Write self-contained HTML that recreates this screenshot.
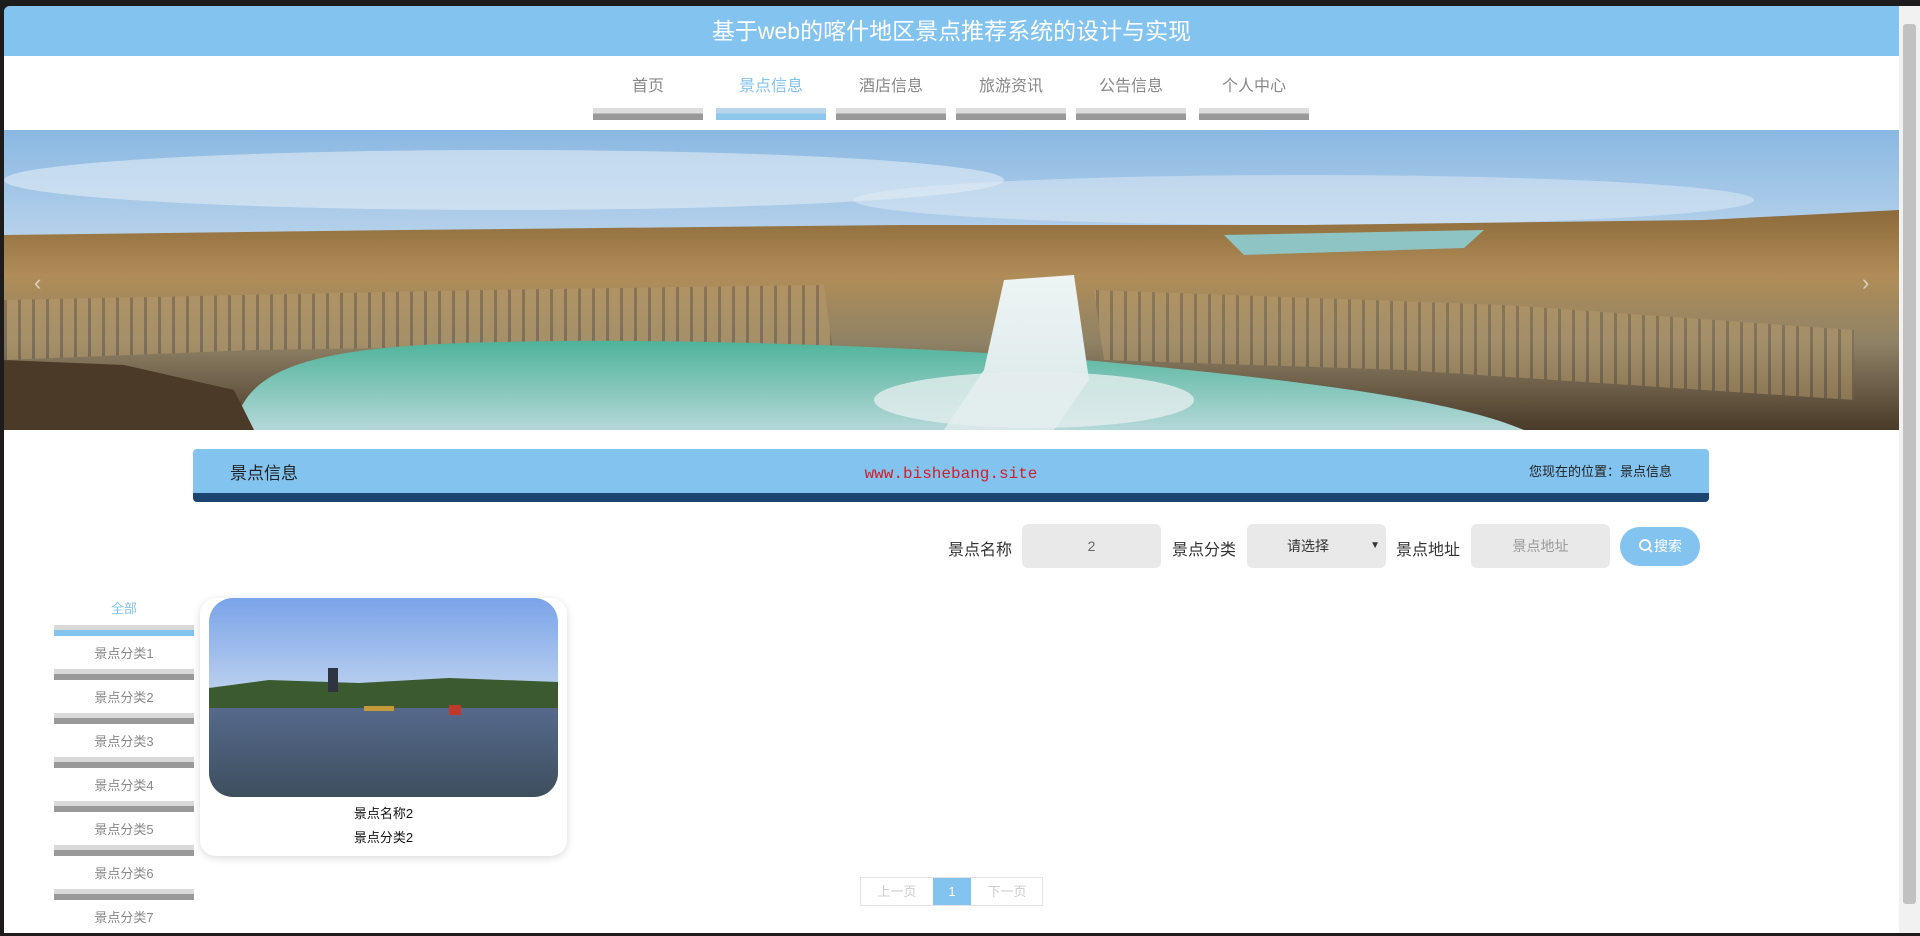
<!DOCTYPE html>
<html><head><meta charset="utf-8"><style>
*{margin:0;padding:0;box-sizing:border-box}
body{width:1920px;height:936px;overflow:hidden;background:#1e1b1c;font-family:"Liberation Sans","Noto Sans CJK SC",sans-serif;position:relative}
#page{position:absolute;left:4px;top:6px;width:1895px;height:927px;background:#fff;overflow:hidden;border-radius:6px 0 0 0}
#sb{position:absolute;left:1899px;top:6px;width:21px;height:927px;background:#f1f1f1}
#sb div{position:absolute;left:4px;top:18px;width:13px;height:880px;background:#c1c1c1;border-radius:3px}
.hdr{position:absolute;left:0;top:0;width:1895px;height:50px;background:#83c3f0;color:#fff;font-size:23px;text-align:center;line-height:50px}
.nav a{position:absolute;top:66px;width:110px;text-align:center;font-size:16px;color:#888;text-decoration:none}
.nav i{position:absolute;top:102px;width:110px;height:12px;background:linear-gradient(#ddd 0,#ddd 45%,#999 45%)}
.nav i.on{background:linear-gradient(#b8d4ea 0,#b8d4ea 45%,#8ec6ec 45%)}
.banner{position:absolute;left:0;top:124px;width:1895px;height:300px}
.tb{position:absolute;left:189px;top:443px;width:1516px;height:53px;border-radius:4px;background:#83c3f0;overflow:hidden}
.tb .bot{position:absolute;left:0;bottom:0;width:100%;height:9px;background:#1b4570}
.lab{position:absolute;font-size:16px;color:#333}
.inp{position:absolute;top:518px;height:44px;background:#e9e9e9;border-radius:6px;font-size:14px;color:#666;text-align:center;line-height:44px}
.side{position:absolute;left:50px;width:140px;text-align:center;font-size:13px;color:#888}
.sbar{position:absolute;left:50px;width:140px;height:11px;background:linear-gradient(#d9d9d9 0,#d9d9d9 45%,#999 45%)}
</style></head><body>
<div id="page">
<div class="hdr">基于web的喀什地区景点推荐系统的设计与实现</div>
<div class="nav">
<a style="left:589px">首页</a><i style="left:589px"></i>
<a style="left:712px;color:#83c3f0">景点信息</a><i class="on" style="left:712px"></i>
<a style="left:832px">酒店信息</a><i style="left:832px"></i>
<a style="left:952px">旅游资讯</a><i style="left:952px"></i>
<a style="left:1072px">公告信息</a><i style="left:1072px"></i>
<a style="left:1195px">个人中心</a><i style="left:1195px"></i>
</div>
<svg class="banner" viewBox="0 0 1895 300" preserveAspectRatio="none">
<defs>
<linearGradient id="sky" x1="0" y1="0" x2="0" y2="1"><stop offset="0" stop-color="#8ab8e2"/><stop offset=".5" stop-color="#c8dcee"/><stop offset="1" stop-color="#7fb0df"/></linearGradient>
<linearGradient id="rock" x1="0" y1="0" x2="0" y2="1"><stop offset="0" stop-color="#8c6a3a"/><stop offset=".3" stop-color="#b08d58"/><stop offset=".6" stop-color="#8f8266"/><stop offset="1" stop-color="#4a3b2a"/></linearGradient>
<linearGradient id="wat" x1="0" y1="0" x2="0" y2="1"><stop offset="0" stop-color="#4fb39a"/><stop offset="1" stop-color="#b4d8d8"/></linearGradient>
<linearGradient id="fall" x1="0" y1="0" x2="0" y2="1"><stop offset="0" stop-color="#eef4f4"/><stop offset="1" stop-color="#d8e8e8"/></linearGradient>
<pattern id="col" width="14" height="10" patternUnits="userSpaceOnUse"><rect width="14" height="10" fill="#b59a6c"/><rect width="3" height="10" fill="#6f6250"/></pattern>
</defs>
<rect width="1895" height="300" fill="url(#sky)"/>
<ellipse cx="500" cy="50" rx="500" ry="30" fill="#e2ecf5" opacity=".6"/>
<ellipse cx="1300" cy="70" rx="450" ry="25" fill="#e2ecf5" opacity=".5"/>
<path d="M0 105 L400 100 L900 95 L1300 95 L1700 90 L1895 80 L1895 300 L0 300Z" fill="url(#rock)"/>
<path d="M0 170 L480 160 L820 155 L830 230 L600 215 L250 220 L0 230Z" fill="url(#col)" opacity=".55"/>
<path d="M1090 160 L1500 175 L1850 200 L1850 270 L1400 240 L1100 230Z" fill="url(#col)" opacity=".5"/>
<path d="M1220 105 L1480 100 L1460 118 L1240 125Z" fill="#8fc4c4"/>
<path d="M230 300 C240 240 300 215 500 212 C650 208 900 215 1080 230 C1300 250 1450 270 1520 300Z" fill="url(#wat)"/>
<path d="M1000 150 L1070 145 L1085 250 L1050 300 L940 300 L980 240Z" fill="url(#fall)"/>
<ellipse cx="1030" cy="270" rx="160" ry="28" fill="#e3eeee" opacity=".8"/>
<path d="M0 230 L120 235 L230 260 L250 300 L0 300Z" fill="#4b3a28"/>
<text x="30" y="160" fill="#fff" opacity=".6" font-size="22">‹</text>
<text x="1858" y="160" fill="#fff" opacity=".6" font-size="22">›</text>
</svg>
<div class="tb"><div class="bot"></div>
<div style="position:absolute;left:37px;top:10px;font-size:17px;color:#222">景点信息</div>
<div style="position:absolute;left:0;width:100%;text-align:center;top:16px;font-family:'Liberation Mono',monospace;font-size:16px;color:#d0202a">www.bishebang.site</div>
<div style="position:absolute;right:37px;top:12px;font-size:13px;color:#222">您现在的位置：景点信息</div>
</div>
<div class="lab" style="left:944px;top:530px">景点名称</div>
<div class="inp" style="left:1018px;width:139px">2</div>
<div class="lab" style="left:1168px;top:530px">景点分类</div>
<div class="inp" style="left:1243px;width:139px;text-align:left;padding-left:40px;color:#333">请选择<span style="position:absolute;right:6px;font-size:10px">▼</span></div>
<div class="lab" style="left:1392px;top:530px">景点地址</div>
<div class="inp" style="left:1467px;width:139px;color:#999">景点地址</div>
<div style="position:absolute;left:1616px;top:521px;width:80px;height:39px;border-radius:20px;background:#83c3f0;color:#fff;font-size:14px;line-height:39px;text-align:center">
<svg width="16" height="16" viewBox="0 0 16 16" style="vertical-align:-3px"><circle cx="7" cy="7" r="5" fill="none" stroke="#fff" stroke-width="1.8"/><path d="M10.5 10.5L14 14" stroke="#fff" stroke-width="1.8"/></svg>搜索</div>
<div class="side" style="top:592px;color:#83c3f0">全部</div>
<div class="sbar" style="top:619px;background:linear-gradient(#d9d9d9 0,#d9d9d9 45%,#83c3f0 45%)"></div>
<div class="side" style="top:637px">景点分类1</div><div class="sbar" style="top:663px"></div>
<div class="side" style="top:681px">景点分类2</div><div class="sbar" style="top:707px"></div>
<div class="side" style="top:725px">景点分类3</div><div class="sbar" style="top:751px"></div>
<div class="side" style="top:769px">景点分类4</div><div class="sbar" style="top:795px"></div>
<div class="side" style="top:813px">景点分类5</div><div class="sbar" style="top:839px"></div>
<div class="side" style="top:857px">景点分类6</div><div class="sbar" style="top:883px"></div>
<div class="side" style="top:901px">景点分类7</div>
<div style="position:absolute;left:196px;top:592px;width:367px;height:258px;border-radius:16px;box-shadow:0 2px 8px rgba(0,0,0,.15);background:#fff">
<svg style="position:absolute;left:9px;top:0;border-radius:24px" width="349" height="199" viewBox="0 0 349 199">
<defs><linearGradient id="s2" x1="0" y1="0" x2="0" y2="1"><stop offset="0" stop-color="#7aa3e8"/><stop offset="1" stop-color="#c6d8f0"/></linearGradient>
<linearGradient id="w2" x1="0" y1="0" x2="0" y2="1"><stop offset="0" stop-color="#56698c"/><stop offset="1" stop-color="#3d4f5e"/></linearGradient></defs>
<rect width="349" height="110" fill="url(#s2)"/>
<path d="M0 90 L60 82 L150 85 L240 80 L349 84 L349 112 L0 112Z" fill="#3c5a30"/>
<rect x="119" y="70" width="10" height="24" fill="#2e3440"/>
<rect x="0" y="110" width="349" height="89" fill="url(#w2)"/>
<rect x="240" y="107" width="12" height="10" fill="#c0392b"/>
<rect x="155" y="108" width="30" height="5" fill="#c59a3a"/>
</svg>
<div style="position:absolute;top:205px;width:100%;text-align:center;font-size:13px;color:#111">景点名称2</div>
<div style="position:absolute;top:229px;width:100%;text-align:center;font-size:13px;color:#111">景点分类2</div>
</div>
<div style="position:absolute;left:856px;top:871px;width:183px;height:29px;border:1px solid #e4e4e4;font-size:13px;color:#ccc;line-height:27px">
<span style="position:absolute;left:0;width:72px;text-align:center">上一页</span>
<span style="position:absolute;left:72px;width:38px;height:27px;background:#83c3f0;color:#fff;text-align:center">1</span>
<span style="position:absolute;left:110px;width:72px;text-align:center">下一页</span>
</div>
</div>
<div id="sb"><div></div></div>
</body></html>
